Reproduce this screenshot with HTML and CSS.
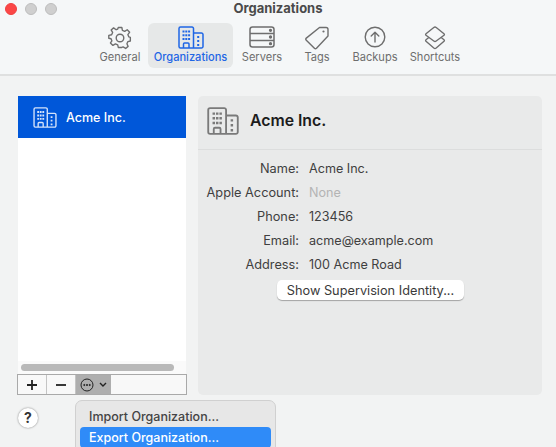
FILE: index.html
```html
<!DOCTYPE html>
<html lang="en">
<head>
    <meta charset="UTF-8">
    <meta name="viewport" content="width=device-width, initial-scale=1.0">
    <title>Organizations</title>
    <link rel="stylesheet" href="styles.css">
</head>
<body>
<svg class="defs" width="0" height="0">
    <symbol id="building" viewBox="0 0 26 23">
        <path d="M15.5 22V2.5a1.5 1.5 0 0 0-1.5-1.5H2.500a1.500 1.500 0 0 0-1.500 1.500V20.500A1.500 1.500 0 0 0 2.500 22H23.500a1.500 1.500 0 0 0 1.500-1.500V8.500A1.500 1.500 0 0 0 23.500 7H15.500M5.500 22v-4a1 1 0 0 1 1-1h3.500a1 1 0 0 1 1 1v4" fill="none" stroke="currentColor" stroke-width="1.500"/>
        <path d="M4.500 4.500h2v2h-2zM7.300 4.500h2v2h-2zM10.100 4.500h2v2h-2zM4.500 8.300h2v2h-2zM7.300 8.300h2v2h-2zM10.100 8.300h2v2h-2zM4.500 12.100h2v2h-2zM7.300 12.100h2v2h-2zM10.100 12.100h2v2h-2zM19.200 10h2v2h-2zM19.200 14h2v2h-2zM19.200 18h2v2h-2z" fill="currentColor"/>
    </symbol>
</svg>

<div class="window">
    <header class="toolbar">
        <div class="lights">
            <span class="light red"></span>
            <span class="light"></span>
            <span class="light"></span>
        </div>
        <div class="title">Organizations</div>
        <nav class="tabs">
            <div class="tab tab-general">
                <svg width="24" height="24" viewBox="0 0 24 24" fill="none" stroke="currentColor" stroke-width="1.400" stroke-linejoin="round">
                    <path d="M10.200 2h3.600l.6 3 2.300 1 2.600-1.700 2.500 2.500L20 9.400l1 2.300 1.500.5v3.600l-2.500.6-1 2.300 1.200 2.600-2.500 2.100-2.600-1.500-1.300.5-.6 0H10.200l-.6-2.600-2.300-1-2.600 1.500-2.500-2.500L3.700 15.700l-.9-2.200-2.300-.5v-3l2.900-.6 1-2.300L2.900 4.500 5.400 2.400 8 4.300l1.600-.7z" transform="translate(0.300 -0.500) scale(.98)"/>
                    <circle cx="12" cy="12" r="3.800"/>
                </svg>
                <span>General</span>
            </div>
            <div class="tab tab-orgs active">
                <svg class="org-icon" width="26" height="23"><use href="#building"/></svg>
                <span>Organizations</span>
            </div>
            <div class="tab tab-servers">
                <svg width="26" height="22" viewBox="0 0 26 22" fill="none" stroke="currentColor" stroke-width="1.500">
                    <rect x="1" y="1" width="24" height="20" rx="2.500"/>
                    <path d="M1 7.500h24M1 14.500h24"/>
                    <circle cx="21.500" cy="4.300" r=".9" fill="currentColor"/>
                    <circle cx="21.500" cy="11" r=".9" fill="currentColor"/>
                    <circle cx="21.500" cy="17.700" r=".9" fill="currentColor"/>
                </svg>
                <span>Servers</span>
            </div>
            <div class="tab tab-tags">
                <svg width="24" height="24" viewBox="0 0 24 24" fill="none" stroke="currentColor" stroke-width="1.400" stroke-linejoin="round">
                    <path d="M14.500 1.500h6.500a2 2 0 0 1 2 2v6.500L11.500 22.300a1.500 1.500 0 0 1-2.100 0L1.300 14.200a1.500 1.500 0 0 1 0-2.100z"/>
                    <circle cx="18.500" cy="5.500" r="1.100" fill="currentColor" stroke="none"/>
                </svg>
                <span>Tags</span>
            </div>
            <div class="tab tab-backups">
                <svg width="22" height="22" viewBox="0 0 22 22" fill="none" stroke="currentColor" stroke-width="1.400" stroke-linecap="round" stroke-linejoin="round">
                    <circle cx="11" cy="11" r="9.800"/>
                    <path d="M11 16V6.500M7.200 10 11 6.300 14.800 10"/>
                </svg>
                <span>Backups</span>
            </div>
            <div class="tab tab-shortcuts">
                <svg width="22" height="24" viewBox="0 0 22 24" fill="none" stroke="currentColor" stroke-width="1.400" stroke-linejoin="round">
                    <path d="M9.800 1.500a2 2 0 0 1 2.400 0l7.800 6.200a1 1 0 0 1 0 1.600l-7.800 5.700a2 2 0 0 1-2.400 0L2 9.300a1 1 0 0 1 0-1.600z"/>
                    <path d="M4.800 11.500 2 13.700a1 1 0 0 0 0 1.600l7.800 6.700a2 2 0 0 0 2.400 0l7.800-6.700a1 1 0 0 0 0-1.600l-2.800-2.200"/>
                </svg>
                <span>Shortcuts</span>
            </div>
        </nav>
    </header>

    <main class="content">
        <section class="sidebar">
            <div class="list">
                <div class="list-row">
                    <svg width="24" height="21"><use href="#building"/></svg>
                    <span>Acme Inc.</span>
                </div>
            </div>
            <div class="scroll-track"><div class="scroll-thumb"></div></div>
            <div class="list-buttons">
                <div class="list-btn">
                    <svg width="12" height="12" viewBox="0 0 12 12"><path d="M6 1v10M1 6h10" stroke="#222" stroke-width="1.800"/></svg>
                </div>
                <div class="list-btn">
                    <svg width="10" height="12" viewBox="0 0 10 12"><path d="M0 6h10" stroke="#222" stroke-width="1.800"/></svg>
                </div>
                <div class="list-btn more">
                    <svg width="14" height="14" viewBox="0 0 14 14" fill="none" stroke="#222" stroke-width="1">
                        <circle cx="7" cy="7" r="6"/>
                        <circle cx="4.300" cy="7" r=".6" fill="#222"/>
                        <circle cx="7" cy="7" r=".6" fill="#222"/>
                        <circle cx="9.700" cy="7" r=".6" fill="#222"/>
                    </svg>
                    <svg width="8" height="5" viewBox="0 0 8 5" fill="none" stroke="#222" stroke-width="1.400"><path d="M1 1l3 3 3-3"/></svg>
                </div>
            </div>
        </section>

        <section class="detail">
            <div class="detail-head">
                <svg width="32" height="30"><use href="#building"/></svg>
                <h2>Acme Inc.</h2>
            </div>
            <dl class="fields">
                <dt>Name:</dt><dd>Acme Inc.</dd>
                <dt>Apple Account:</dt><dd class="empty">None</dd>
                <dt>Phone:</dt><dd>123456</dd>
                <dt>Email:</dt><dd>acme@example.com</dd>
                <dt>Address:</dt><dd>100 Acme Road</dd>
            </dl>
            <div class="detail-actions">
                <button type="button" class="push-btn">Show Supervision Identity...</button>
            </div>
        </section>
    </main>

    <div class="help">?</div>

    <div class="menu">
        <div class="menu-item">Import Organization...</div>
        <div class="menu-item selected">Export Organization...</div>
    </div>
</div>
</body>
</html>
```

FILE: styles.css
```css
html, body {
    margin: 0;
    padding: 0;
}

body {
    font-family: 'Inter', 'Liberation Sans', sans-serif;
    font-size: 12.75px;
    color: #3a3a3a;
    background-color: #f2f3f3;
    overflow: hidden;
}

.defs {
    position: absolute;
}

.window {
    position: relative;
    width: 556px;
    height: 447px;
    overflow: hidden;
    background-color: #f2f3f3;
}

.toolbar {
    position: relative;
    height: 76px;
    box-sizing: border-box;
    background-color: #f5f7f8;
    border-bottom: 2px solid #dfe0e0;
}

.lights {
    position: absolute;
    top: 3px;
    left: 5px;
    display: flex;
    gap: 8px;
}

.light {
    width: 12px;
    height: 12px;
    box-sizing: border-box;
    border-radius: 50%;
    background-color: #cfcfcf;
    border: 0.5px solid #bdbdbd;
}

.light.red {
    background-color: #fb4646;
    border-color: #f04040;
}

.title {
    height: 23px;
    text-align: center;
    font-size: 13px;
    font-weight: 700;
    color: #4a4a4a;
}

.tabs {
    display: flex;
    gap: 4px;
    padding-left: 96px;
}

.tab {
    height: 45px;
    display: flex;
    flex-direction: column;
    align-items: center;
    justify-content: space-between;
    padding: 3px 0 4px;
    box-sizing: border-box;
    color: #6e6e6e;
    border-radius: 6px;
    font-size: 11.1px;
    white-space: nowrap;
}

.tab svg {
    flex: none;
}

.tab-general { width: 48px; }
.tab-orgs { width: 85px; }
.tab-servers { width: 50px; }
.tab-tags { width: 52px; }
.tab-backups { width: 56px; }
.tab-shortcuts { width: 56px; }

.tab.active {
    background-color: #e6e8e8;
    color: #1f66e5;
    font-weight: 500;
}

.content {
    display: flex;
    gap: 12px;
    padding: 20px 14px 0 18px;
}

.sidebar {
    width: 168px;
    height: 299px;
    display: flex;
    flex-direction: column;
}

.list {
    height: 265px;
    background-color: #ffffff;
}

.list-row {
    height: 42px;
    display: flex;
    align-items: center;
    gap: 9px;
    padding: 1px 0 0 15px;
    box-sizing: border-box;
    background-color: #0057d9;
    color: #ffffff;
    font-weight: 500;
    font-size: 12.5px;
}

.list-row svg {
    color: #d5e3fa;
}

.scroll-track {
    height: 13px;
    display: flex;
    align-items: center;
    padding: 0 12px 0 3px;
    background-color: #fafafa;
}

.scroll-thumb {
    flex: 1;
    height: 7px;
    border-radius: 4px;
    background-color: #b9b9b9;
}

.list-buttons {
    width: 170px;
    height: 21px;
    margin-left: -1px;
    display: flex;
    box-sizing: border-box;
    border: 1px solid #a9a9a9;
    background-color: #f8f8f8;
}

.list-btn {
    width: 28px;
    display: flex;
    align-items: center;
    justify-content: center;
    border-right: 1px solid #c4c4c4;
}

.list-btn.more {
    width: 35px;
    gap: 5px;
    background-color: #aeaeae;
    border-right: 0;
}

.detail {
    width: 344px;
    height: 299px;
    box-sizing: border-box;
    background-color: #e9eaea;
    border-radius: 5px;
}

.detail-head {
    height: 54px;
    display: flex;
    align-items: center;
    gap: 11px;
    padding: 0 0 4px 9px;
    box-sizing: border-box;
    border-bottom: 1px solid #dcdddd;
    color: #7a7a7a;
}

.detail-head h2 {
    margin: 0;
    font-size: 15.8px;
    font-weight: 600;
    color: #1c1c1c;
}

.fields {
    display: grid;
    grid-template-columns: 101px 1fr;
    column-gap: 10px;
    grid-auto-rows: 24px;
    align-items: center;
    margin: 6px 0 0;
}

.fields dt {
    text-align: right;
    color: #3f3f3f;
}

.fields dd {
    margin: 0;
    font-size: 12.6px;
    color: #3f3f3f;
}

.fields dd.empty {
    color: #b4b4b4;
}

.detail-actions {
    display: flex;
    padding: 4px 0 0 79px;
}

.push-btn {
    width: 187px;
    height: 20px;
    padding: 0;
    border: 0;
    border-radius: 5px;
    background-color: #ffffff;
    box-shadow: 0 1px 1px rgba(0, 0, 0, 0.3);
    font-family: inherit;
    font-size: 12.75px;
    color: #3a3a3a;
}

.help {
    position: absolute;
    left: 18px;
    top: 408px;
    width: 20px;
    height: 20px;
    border-radius: 50%;
    background-color: #ffffff;
    box-shadow: 0 0 2px rgba(0, 0, 0, 0.5);
    text-align: center;
    line-height: 20px;
    font-size: 14px;
    font-weight: 700;
    color: #333333;
}

.menu {
    position: absolute;
    left: 75px;
    top: 400px;
    width: 201px;
    height: 70px;
    padding: 5px 4px;
    box-sizing: border-box;
    background-color: #e7e7e7;
    border: 1px solid #d0d0d0;
    border-radius: 7px;
}

.menu-item {
    height: 21px;
    padding-left: 9px;
    line-height: 21px;
    color: #444444;
    border-radius: 4px;
    font-size: 12.5px;
    font-weight: 500;
}

.menu-item.selected {
    background-color: #2f8bf8;
    color: #ffffff;
}
```
